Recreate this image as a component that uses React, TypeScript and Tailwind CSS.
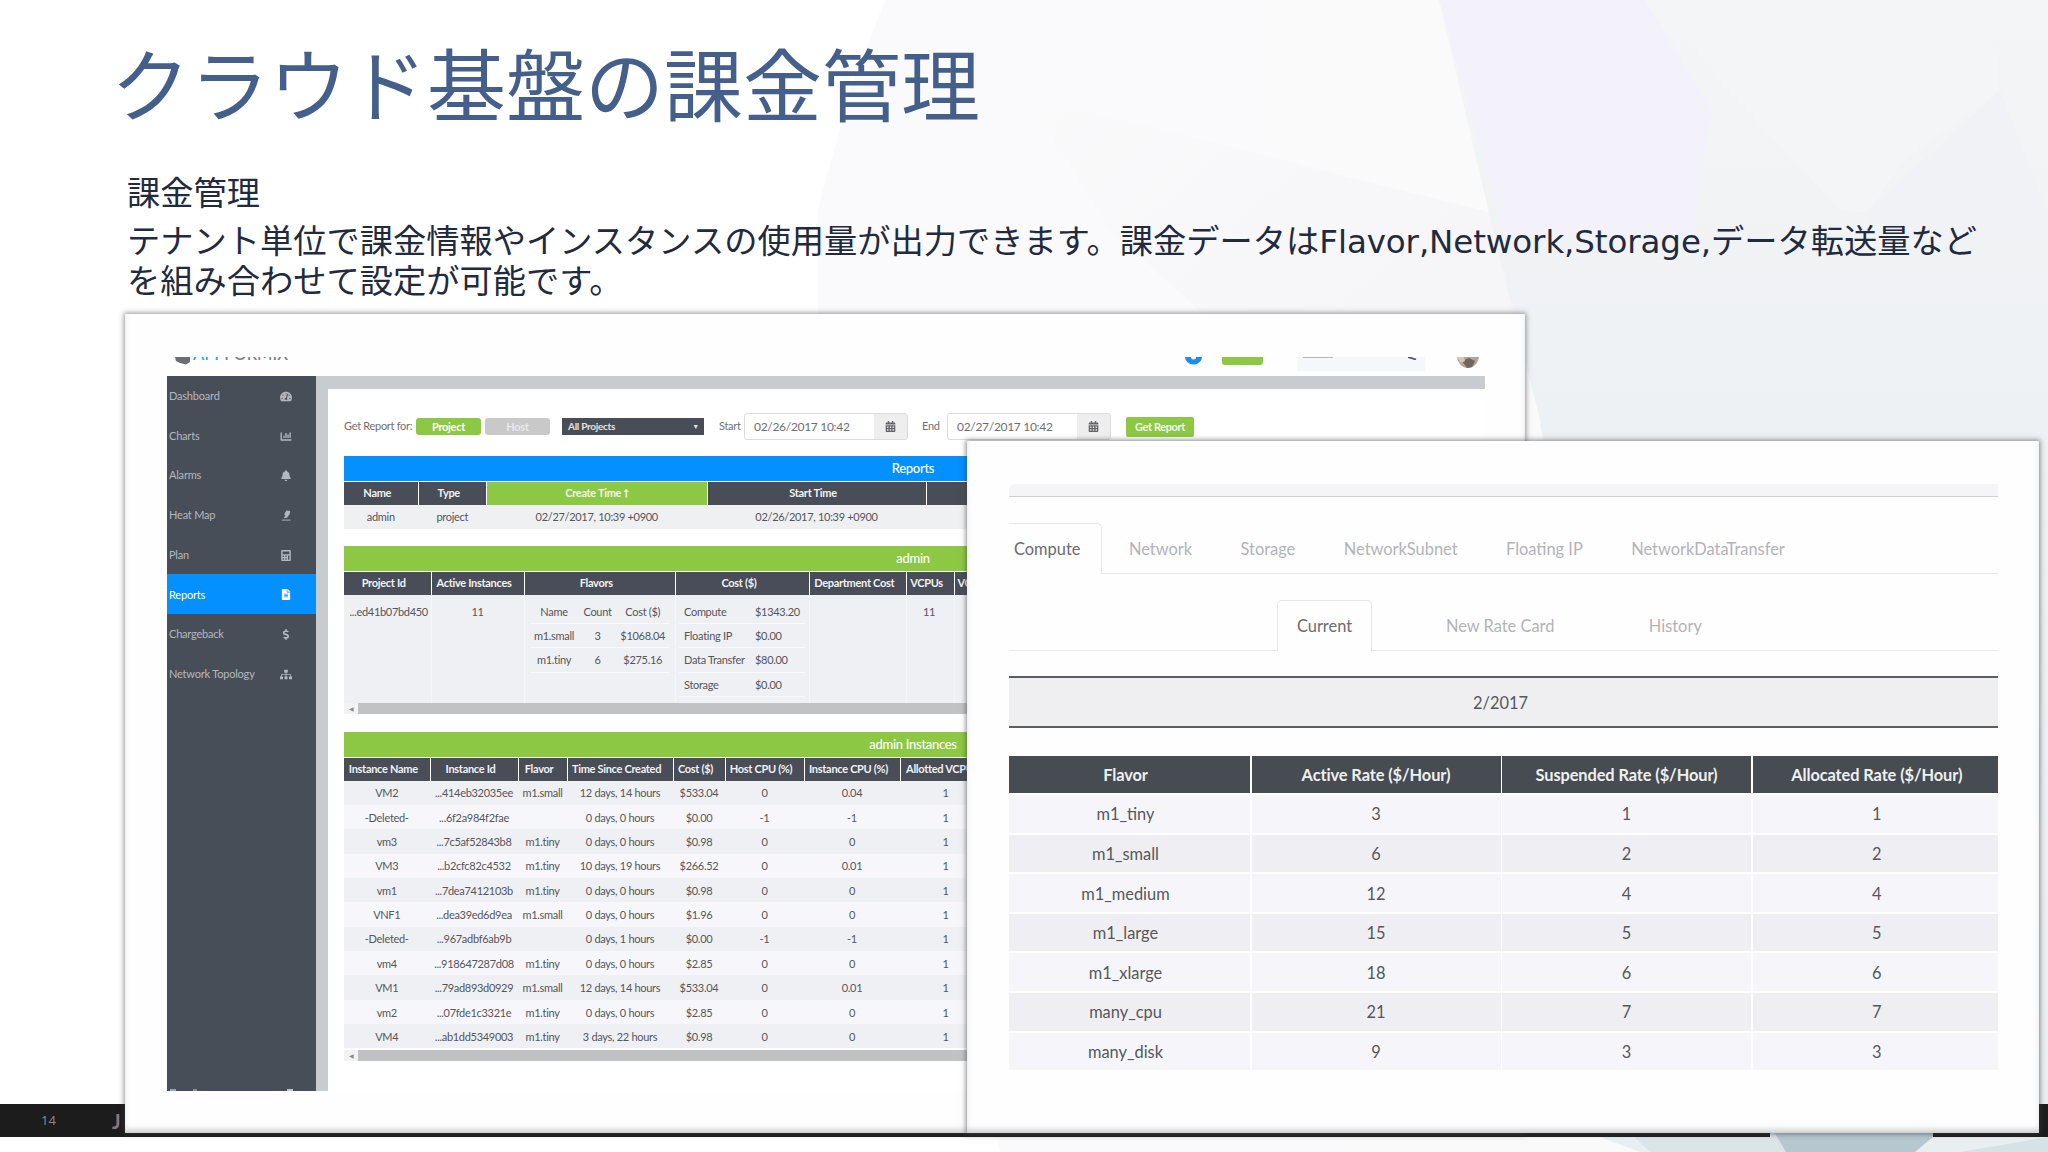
import React from 'react';
import clsx from 'clsx';
import {
  FaTachometerAlt,
  FaChartBar,
  FaBell,
  FaCalculator,
  FaFileAlt,
  FaDollarSign,
  FaSitemap,
  FaCalendarAlt,
} from 'react-icons/fa';

const HeatIcon: React.FC<{ className?: string }> = ({ className }) => (
  <svg className={className} viewBox="0 0 24 24" fill="currentColor">
    <path d="M13 1 21 2 20 9 14 17 8 18 8 15 11 12 8 9Z" />
    <path d="M3 21H22V23H3Z" />
  </svg>
);

const menu = [
  { label: 'Dashboard', icon: FaTachometerAlt },
  { label: 'Charts', icon: FaChartBar },
  { label: 'Alarms', icon: FaBell },
  { label: 'Heat Map', icon: HeatIcon },
  { label: 'Plan', icon: FaCalculator },
  { label: 'Reports', icon: FaFileAlt, active: true },
  { label: 'Chargeback', icon: FaDollarSign },
  { label: 'Network Topology', icon: FaSitemap },
];

const instances = [
  ['VM2', '...414eb32035ee', 'm1.small', '12 days, 14 hours', '$533.04', '0', '0.04', '1'],
  ['-Deleted-', '...6f2a984f2fae', '', '0 days, 0 hours', '$0.00', '-1', '-1', '1'],
  ['vm3', '...7c5af52843b8', 'm1.tiny', '0 days, 0 hours', '$0.98', '0', '0', '1'],
  ['VM3', '...b2cfc82c4532', 'm1.tiny', '10 days, 19 hours', '$266.52', '0', '0.01', '1'],
  ['vm1', '...7dea7412103b', 'm1.tiny', '0 days, 0 hours', '$0.98', '0', '0', '1'],
  ['VNF1', '...dea39ed6d9ea', 'm1.small', '0 days, 0 hours', '$1.96', '0', '0', '1'],
  ['-Deleted-', '...967adbf6ab9b', '', '0 days, 1 hours', '$0.00', '-1', '-1', '1'],
  ['vm4', '...918647287d08', 'm1.tiny', '0 days, 0 hours', '$2.85', '0', '0', '1'],
  ['VM1', '...79ad893d0929', 'm1.small', '12 days, 14 hours', '$533.04', '0', '0.01', '1'],
  ['vm2', '...07fde1c3321e', 'm1.tiny', '0 days, 0 hours', '$2.85', '0', '0', '1'],
  ['VM4', '...ab1dd5349003', 'm1.tiny', '3 days, 22 hours', '$0.98', '0', '0', '1'],
];

const flavorUsage = [
  ['Name', 'Count', 'Cost ($)'],
  ['m1.small', '3', '$1068.04'],
  ['m1.tiny', '6', '$275.16'],
];

const costs = [
  ['Compute', '$1343.20'],
  ['Floating IP', '$0.00'],
  ['Data Transfer', '$80.00'],
  ['Storage', '$0.00'],
];

const rates = [
  ['m1_tiny', '3', '1', '1'],
  ['m1_small', '6', '2', '2'],
  ['m1_medium', '12', '4', '4'],
  ['m1_large', '15', '5', '5'],
  ['m1_xlarge', '18', '6', '6'],
  ['many_cpu', '21', '7', '7'],
  ['many_disk', '9', '3', '3'],
];

const Backdrop: React.FC = () => (
  <svg className="absolute inset-0" width="2048" height="1152" viewBox="0 0 2048 1152">
    <defs>
      <linearGradient id="haze" x1="0" x2="1">
        <stop offset="0" stopColor="#fafafc" />
        <stop offset="0.6" stopColor="#fafafb" />
        <stop offset="1" stopColor="#f8f8fa" />
      </linearGradient>
      <linearGradient id="wedge" x1="0" x2="1" y1="0" y2="0.5">
        <stop offset="0" stopColor="#fafafb" />
        <stop offset="1" stopColor="#f6f6f8" />
      </linearGradient>
      <linearGradient id="side" x1="0" x2="0" y1="0" y2="1">
        <stop offset="0" stopColor="#f4f5f6" />
        <stop offset="0.35" stopColor="#eef1f4" />
        <stop offset="1" stopColor="#ebeff2" />
      </linearGradient>
    </defs>
    <path d="M885 0H2048V1152H1000L900 700 818 320V210L850 90Z" fill="url(#haze)" />
    <path d="M1024 95 1500 215 1520 320H1210L1110 230Z" fill="url(#wedge)" />
    <path d="M1439 0H2048V1152H1640L1540 420 1500 260Z" fill="url(#side)" />
    <path d="M1439 0H1645L1712 110 1692 235H1504Z" fill="#f3f2fb" />
    <path d="M1728 90 1840 210 1866 213 1905 160 2000 90 1985 0H1660Z" fill="#f4f5f7" />
    <path d="M2000 90 1866 213 1875 240H2048V213Z" fill="#f1f2f5" />
    <path d="M1600 1137H2048V1152H1640Z" fill="#e9eff1" />
    <path d="M1630 1133H1790V1152H1650Z" fill="#dbe5e7" />
    <path d="M1770 1125H1933V1137L1915 1152H1786Z" fill="#b7c7d0" />
    <path d="M1960 1152 2048 1137V1152Z" fill="#d5e2e6" />
  </svg>
);

const Sidebar: React.FC = () => (
  <nav className="flex w-[149px] flex-col overflow-hidden bg-[#484e58] text-[11px] tracking-[-0.2px] text-[#b4b8be]">
    {menu.map(({ label, icon: Icon, active }) => (
      <div
        key={label}
        className={clsx(
          'flex h-[39.7px] shrink-0 items-center justify-between pl-[2px] pr-[24px] pt-px',
          active && 'bg-[#0590ff] text-white'
        )}
      >
        <span className="whitespace-nowrap">{label}</span>
        <Icon className="h-[11px] w-[12px]" />
      </div>
    ))}
    <div className="mt-auto flex h-[2px] justify-between pl-[3px] pr-[23px]">
      <div className="flex gap-[17px]">
        <i className="w-[6px] bg-[#a0a4aa]" />
        <i className="w-[4px] bg-[#8a8e96]" />
      </div>
      <i className="w-[6px] bg-[#c4c7cc]" />
    </div>
  </nav>
);

const DateInput: React.FC<{ value: string }> = ({ value }) => (
  <div className="flex h-[27px] w-[164px] overflow-hidden rounded-[3px] border border-[#dcdcde] text-[#6e6f74]">
    <span className="flex flex-1 items-center pl-[9px] pt-px text-[12px] tracking-[-0.3px]">{value}</span>
    <span className="flex w-[33px] items-center justify-center bg-[#eeeeef] pr-px text-[11px] text-[#66666a]">
      <FaCalendarAlt />
    </span>
  </div>
);

const Toolbar: React.FC = () => (
  <div className="flex h-[27px] items-center text-[11px] text-[#6f7075]">
    <span className="w-[72px] whitespace-nowrap">Get Report for:</span>
    <button className="mr-[4px] h-[17px] w-[65px] rounded-[3px] bg-[#8cc843] font-bold leading-none text-white">Project</button>
    <button className="mr-[12px] h-[17px] w-[65px] rounded-[3px] bg-[#c9c9ca] font-bold leading-none text-[#e9e9ea]">Host</button>
    <div className="flex h-[17px] w-[142px] items-center justify-between bg-[#484d57] pl-[6px] pr-[5px] text-[10px] font-bold text-[#e2e3e6]">
      <span>All Projects</span>
      <span className="text-[7px]">▼</span>
    </div>
    <span className="ml-[15px] w-[25px]">Start</span>
    <DateInput value="02/26/2017 10:42" />
    <span className="ml-[14px] w-[25px]">End</span>
    <DateInput value="02/27/2017 10:42" />
    <button className="ml-[15px] h-[20px] w-[68px] rounded-[2px] bg-[#8cc843] font-bold leading-none tracking-[-0.4px] text-[#f2f8e8]">Get Report</button>
  </div>
);

const TitleBar: React.FC<{ tone?: 'blue' | 'green'; children: React.ReactNode }> = ({ tone = 'green', children }) => (
  <div
    className={clsx(
      'mb-px flex h-[24.5px] items-center justify-center pt-px text-[13px] font-medium text-white',
      tone === 'blue' ? 'bg-[#0590ff]' : 'bg-[#8cc843]'
    )}
  >
    {children}
  </div>
);

const Head: React.FC<{ className?: string; children?: React.ReactNode }> = ({ className, children }) => (
  <div
    className={clsx(
      'flex h-[23px] items-center justify-center whitespace-nowrap bg-[#484d57] pr-[7px] text-[11px] font-bold tracking-[-0.3px] text-[#f1f2f4]',
      className
    )}
  >
    {children}
  </div>
);

const ScrollBar: React.FC = () => (
  <div className="flex h-[11px] items-center bg-[#f2f3f5]">
    <span className="w-[14px] text-center text-[6px] text-[#8b8b8f]">◀</span>
    <div className="h-full flex-1 bg-[#c1c2c4]" />
  </div>
);

const ReportsTable: React.FC = () => (
  <section className="mt-[16px]">
    <TitleBar tone="blue">Reports</TitleBar>
    <div className="grid grid-cols-[73.5px_67.5px_219.5px_218px_1fr] gap-x-px">
      <Head>Name</Head>
      <Head>Type</Head>
      <Head className="bg-[#8cc843]! pr-0!">Create Time ⭡</Head>
      <Head>Start Time</Head>
      <Head />
    </div>
    <div className="grid h-[24.5px] grid-cols-[73.5px_67.5px_219.5px_218px_1fr] items-center gap-x-px bg-[#eff0f2] pt-px text-center">
      <span>admin</span>
      <span>project</span>
      <span>02/27/2017, 10:39 +0900</span>
      <span>02/26/2017, 10:39 +0900</span>
    </div>
  </section>
);

const AdminTable: React.FC = () => (
  <section className="mt-[17px]">
    <TitleBar>admin</TitleBar>
    <div className="grid grid-cols-[86.5px_92px_150.5px_133px_95.5px_47px_1fr] gap-x-px">
      <Head>Project Id</Head>
      <Head>Active Instances</Head>
      <Head>Flavors</Head>
      <Head>Cost ($)</Head>
      <Head>Department Cost</Head>
      <Head>VCPUs</Head>
      <Head className="justify-start! pl-[3px]">VCPU Usage</Head>
    </div>
    <div className="grid h-[108px] grid-cols-[86.5px_92px_150.5px_133px_95.5px_47px_1fr] gap-x-px bg-[#f5f6f8] text-center leading-[24.3px]">
      <div className="bg-[#eff0f3] pl-[3px] pt-[5px]">...ed41b07bd450</div>
      <div className="bg-[#eff0f3] pt-[5px]">11</div>
      <div className="bg-[#eff0f3] pl-[5px] pr-[6px] pt-[5px]">
        {flavorUsage.map((row) => (
          <div key={row[0]} className="grid h-[24.4px] grid-cols-[49px_38px_1fr] border-b border-[#f8f9fb] leading-[24.3px]">
            {row.map((cell) => (
              <span key={cell}>{cell}</span>
            ))}
          </div>
        ))}
      </div>
      <div className="bg-[#eff0f3] pl-[3px] pr-[4px] pt-[5px] text-left">
        {costs.map(([name, value]) => (
          <div key={name} className="grid h-[24.4px] grid-cols-[71px_1fr] whitespace-nowrap border-b border-[#f8f9fb] pl-[5px] leading-[24.3px]">
            <span>{name}</span>
            <span>{value}</span>
          </div>
        ))}
      </div>
      <div className="bg-[#eff0f3]" />
      <div className="bg-[#eff0f3] pr-[2px] pt-[5px]">11</div>
      <div className="bg-[#eff0f3]" />
    </div>
    <ScrollBar />
  </section>
);

const InstancesTable: React.FC = () => (
  <section className="mt-[18.5px]">
    <TitleBar>admin Instances</TitleBar>
    <div className="grid grid-cols-[85.5px_87px_48px_105px_51px_78px_95px_90px_1fr] gap-x-px">
      {['Instance Name', 'Instance Id', 'Flavor', 'Time Since Created', 'Cost ($)', 'Host CPU (%)', 'Instance CPU (%)', 'Allotted VCPUs', ''].map((h) => (
        <Head key={h}>{h}</Head>
      ))}
    </div>
    {instances.map((row, i) => (
      <div
        key={i}
        className={clsx(
          'grid h-[24.35px] grid-cols-[85.5px_87px_48px_105px_51px_78px_95px_90px_1fr] items-center gap-x-px whitespace-nowrap pt-[2px] text-center',
          i % 2 ? 'bg-[#f7f7fb]' : 'bg-[#eff0f3]'
        )}
      >
        {row.map((cell, j) => (
          <span key={j}>{cell}</span>
        ))}
      </div>
    ))}
    <div className="mt-[2px]">
      <ScrollBar />
    </div>
  </section>
);

const Dashboard: React.FC = () => (
  <div className="flex h-[734px] w-[1318px] flex-col font-[Lato,sans-serif]">
    {/* Page header, only its lower edge is in view */}
    <div className="flex h-[19px] shrink-0 items-start overflow-hidden pl-[8px]">
      <svg width="16" height="8" viewBox="0 0 16 8">
        <path d="M0 0H15V5L11 7.500 5 6 1 4Z" fill="#6a6d72" />
      </svg>
      <div className="-mt-[13px] ml-[2px] text-[16.5px] font-medium leading-[20px] text-[#7b7e84]">
        <span className="text-[#2c9cf0]">APP</span>FORMIX
      </div>
      <div className="ml-auto flex items-start pr-[6px]">
        <svg width="17" height="8" viewBox="0 0 17 8">
          <path d="M0 0A8.500 7.500 0 0 0 17 0H11A2.500 2.500 0 0 1 6 0Z" fill="#1d8df0" />
        </svg>
        <div className="ml-[20px] h-[8px] w-[41px] rounded-b-[3px] bg-[#8cc843]" />
        <div className="ml-[34px] flex h-[14px] w-[128px] justify-between bg-[#f6f7fa] pl-[6px] pr-[8px]">
          <i className="h-px w-[30px] bg-[#b5b7bb]" />
          <svg width="9" height="3" viewBox="0 0 9 3">
            <path d="M0 0 8 2.500" stroke="#55585e" strokeWidth="1.800" />
          </svg>
        </div>
        <svg className="ml-[32px]" width="22" height="11" viewBox="0 0 22 11">
          <path d="M0 0H22C21 6 17 11 11 11S1 6 0 0Z" fill="#b3a396" />
          <path d="M5 4 12 1 18 4 15 10 10 11Z" fill="#6f665f" />
          <path d="M0 0H7L8 4 4 6Z" fill="#d6c8bc" />
        </svg>
      </div>
    </div>
    <div className="flex min-h-0 flex-1">
      <Sidebar />
      <div className="flex min-w-0 flex-1 flex-col border-l-[12px] border-t-[13px] border-[#c8cbd0] bg-white">
        <div className="w-[1154px] pl-[16px] pt-[24px] text-[11px] tracking-[-0.3px] text-[#54565c]">
          <Toolbar />
          <ReportsTable />
          <AdminTable />
          <InstancesTable />
        </div>
      </div>
    </div>
  </div>
);

const RateCard: React.FC = () => (
  <div className="flex w-[989px] flex-col font-[Lato,sans-serif] text-[16.4px] text-[#55575c]">
    <div className="h-[13px] rounded-tl-md border-b-[1.5px] border-[#cfd0d3] bg-[#f5f5f7]" />
    {/* Resource tabs */}
    <div className="mt-[26px] flex h-[51px] text-[#b3b3b8]">
      <div className="flex w-[93px] items-center rounded-tr-[5px] border-r-[1.5px] border-t-[1.5px] border-[#e9e5ea] pl-[5px] pt-px text-[#6b6b70]">Compute</div>
      <div className="flex flex-1 items-center gap-[48.5px] border-b-[1.5px] border-[#e9e5ea] pl-[27px] pt-[3px]">
        <span>Network</span>
        <span>Storage</span>
        <span>NetworkSubnet</span>
        <span>Floating IP</span>
        <span>NetworkDataTransfer</span>
      </div>
    </div>
    {/* Rate card tabs */}
    <div className="mt-[26px] flex h-[51px] text-[#b3b3b8]">
      <div className="w-[268px] border-b-[1.5px] border-[#ece9ee]" />
      <div className="flex w-[95px] items-center justify-center rounded-t-[5px] border-x-[1.5px] border-t-[1.5px] border-[#e9e5ea] pt-px text-[#6b6b70]">Current</div>
      <div className="flex flex-1 items-center gap-[94.5px] border-b-[1.5px] border-[#ece9ee] pl-[74px] pt-[3px]">
        <span>New Rate Card</span>
        <span>History</span>
      </div>
    </div>
    <div className="mt-[25px] flex h-[52px] items-center justify-center border-y-2 border-[#5b5f64] bg-[#efeff1] pr-[6px] pt-[2px]">2/2017</div>
    <div className="mt-[28px] grid h-[37px] grid-cols-[241px_249px_249px_1fr] gap-x-[1.5px] text-[#eef0f1]">
      {['Flavor', 'Active Rate ($/Hour)', 'Suspended Rate ($/Hour)', 'Allocated Rate ($/Hour)'].map((h) => (
        <div
          key={h}
          className="flex items-center justify-center bg-[#464c52] pt-[2px] font-bold tracking-[-0.1px] first:pr-[8px] last:pl-[3px]"
        >
          {h}
        </div>
      ))}
    </div>
    {rates.map((row, i) => (
      <div key={row[0]} className="grid h-[39.6px] grid-cols-[241px_249px_249px_1fr] gap-x-[1.5px] pt-[2px]">
        {row.map((cell, j) => (
          <div
            key={j}
            className={clsx(
              'flex items-center justify-center pt-[2px] first:pr-[8px] last:pl-[3px]',
              i % 2 ? 'bg-[#efeff3]' : 'bg-[#f6f6fa]'
            )}
          >
            {cell}
          </div>
        ))}
      </div>
    ))}
  </div>
);

const App: React.FC = () => {
  return (
    <div className="relative h-[1152px] w-[2048px] overflow-hidden bg-white">
      <Backdrop />

      {/* Footer bar runs behind the two captures */}
      <footer className="absolute inset-x-0 top-[1104px] flex h-[33px] items-center">
        <div className="flex h-full w-[1770px] items-center bg-[#1c1c1d] font-['Noto_Sans',sans-serif]">
          <span className="ml-[41px] w-[71px] text-[13px] text-[#85858a]">14</span>
          <span className="font-[Lato,sans-serif] text-[20px] font-bold text-[#8d7679]">J</span>
        </div>
        <div className="ml-[163px] h-full flex-1 bg-[#1c1c1d]" />
      </footer>

      <header className="relative h-[314px] whitespace-nowrap pl-[127px] pt-[34px] font-['Noto_Sans','Noto_Sans_CJK_JP',sans-serif] text-[#222a3d]">
        <h1 className="-ml-[16px] h-[138px] text-[79px] leading-[104px] text-[#455f8b]">クラウド基盤の課金管理</h1>
        <p className="text-[33.25px] leading-[40px]">課金管理</p>
        <p className="mt-[8px] text-[33.25px] leading-[40px]">
          テナント単位で課金情報やインスタンスの使用量が出力できます。課金データは<span className="font-['DejaVu_Sans',sans-serif] text-[32.5px] leading-none tracking-[-0.1px]">Flavor,Network,Storage,</span>データ転送量など
          <br />
          を組み合わせて設定が可能です。
        </p>
      </header>

      <section className="relative ml-[125px] h-[819px] w-[1400px] bg-[#fefefe] pl-[42px] pt-[43px] shadow-[0_0_5px_1px_rgba(60,60,65,0.55),inset_0_-5px_6px_-2px_rgba(0,0,0,0.22)]">
        <Dashboard />
      </section>

      <section className="absolute left-[967px] top-[441px] h-[692px] w-[1072px] bg-[#fefefe] pl-[42px] pt-[43px] shadow-[0_0_5px_1px_rgba(60,60,65,0.6),inset_0_-5px_6px_-2px_rgba(0,0,0,0.22)]">
        <RateCard />
      </section>
    </div>
  );
};

export default App;
